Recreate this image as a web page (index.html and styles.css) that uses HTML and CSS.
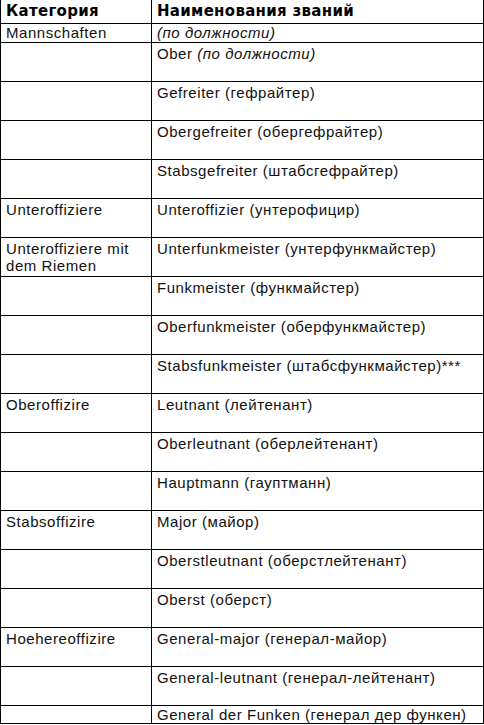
FILE: index.html
```html
<!DOCTYPE html>
<html lang="ru">
<head>
<meta charset="utf-8">
<link rel="stylesheet" href="styles.css">
</head>
<body>
<div class="ranks">
  <div class="cell head">Категория</div><div class="cell head">Наименования званий</div>
  <div class="cell first">Mannschaften</div><div class="cell first"><i>(по должности)</i></div>
  <div class="cell"></div><div class="cell">Ober <i>(по должности)</i></div>
  <div class="cell"></div><div class="cell">Gefreiter (гефрайтер)</div>
  <div class="cell"></div><div class="cell">Obergefreiter (обергефрайтер)</div>
  <div class="cell"></div><div class="cell">Stabsgefreiter (штабсгефрайтер)</div>
  <div class="cell">Unteroffiziere</div><div class="cell">Unteroffizier (унтерофицир)</div>
  <div class="cell">Unteroffiziere mit<br>dem Riemen</div><div class="cell">Unterfunkmeister (унтерфункмайстер)</div>
  <div class="cell"></div><div class="cell">Funkmeister (функмайстер)</div>
  <div class="cell"></div><div class="cell">Oberfunkmeister (оберфункмайстер)</div>
  <div class="cell"></div><div class="cell">Stabsfunkmeister (штабсфункмайстер)***</div>
  <div class="cell">Oberoffizire</div><div class="cell">Leutnant (лейтенант)</div>
  <div class="cell"></div><div class="cell">Oberleutnant (оберлейтенант)</div>
  <div class="cell"></div><div class="cell">Hauptmann (гауптманн)</div>
  <div class="cell">Stabsoffizire</div><div class="cell">Major (майор)</div>
  <div class="cell"></div><div class="cell">Oberstleutnant (оберстлейтенант)</div>
  <div class="cell"></div><div class="cell">Oberst (оберст)</div>
  <div class="cell">Hoehereoffizire</div><div class="cell">General-major (генерал-майор)</div>
  <div class="cell"></div><div class="cell">General-leutnant (генерал-лейтенант)</div>
  <div class="cell last"></div><div class="cell last">General der Funken (генерал дер функен)</div>
</div>
</body>
</html>
```

FILE: styles.css
```css
html, body {
  margin: 0;
  padding: 0;
  background: #fff;
}
body {
  width: 484px;
  height: 725px;
  overflow: hidden;
  font-family: "Liberation Sans", Arial, sans-serif;
  font-size: 15px;
  letter-spacing: 0.55px;
  color: #111;
}
.ranks {
  display: grid;
  grid-template-columns: 151px 332px;
  border-left: 1px solid #000;
  width: 484px;
  box-sizing: border-box;
}
.cell {
  box-sizing: border-box;
  height: 39px;
  border-right: 1px solid #000;
  border-bottom: 1px solid #000;
  padding: 2px 0 0 5px;
  line-height: 17px;
  white-space: nowrap;
}
.head {
  height: 24px;
  font-family: "DejaVu Sans", "Liberation Sans", sans-serif;
  font-weight: 700;
  font-size: 15px;
  letter-spacing: 0.3px;
  color: #000;
  padding-top: 3px;
}
.first {
  height: 19px;
  padding-top: 0;
}
.last {
  height: 18px;
  padding-top: 0;
}
```
